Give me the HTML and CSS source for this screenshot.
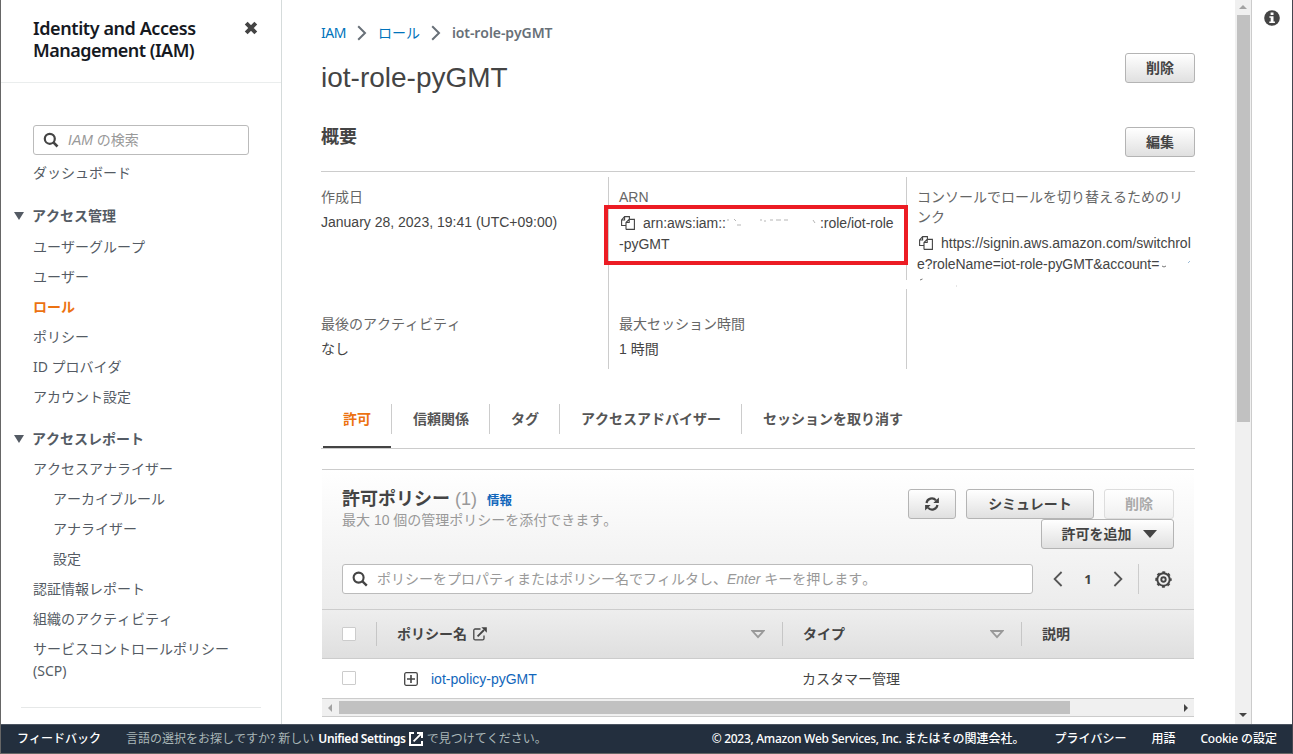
FILE: index.html
```html
<!DOCTYPE html>
<html lang="ja">
<head>
<meta charset="utf-8">
<title>iot-role-pyGMT - IAM</title>
<link rel="stylesheet" href="styles.css">
</head>
<body>
<div class="app">
  <div class="upper">
    <nav class="sidebar">
      <header class="side-head">
        <h2 class="side-title"><span class="t1">Identity and Access</span><br><span class="t2">Management (IAM)</span></h2>
        <svg class="close" width="14" height="14" viewBox="0 0 14 14"><path d="M2.2 2.2L11.8 11.8M11.8 2.2L2.2 11.8" stroke="#444" stroke-width="4"/></svg>
      </header>
      <div class="side-body">
        <div class="search side-search">
          <svg width="16" height="16" viewBox="0 0 16 16"><circle cx="6.8" cy="6.8" r="5" fill="none" stroke="#444" stroke-width="2.2"/><path d="M10.4 10.4L14.5 14.5" stroke="#444" stroke-width="2.6"/></svg>
          <span><i>IAM</i> の検索</span>
        </div>
        <a class="item first">ダッシュボード</a>
        <div class="section"><i class="tri"></i>アクセス管理</div>
        <a class="item">ユーザーグループ</a>
        <a class="item">ユーザー</a>
        <a class="item active">ロール</a>
        <a class="item">ポリシー</a>
        <a class="item">ID プロバイダ</a>
        <a class="item">アカウント設定</a>
        <div class="section second"><i class="tri"></i>アクセスレポート</div>
        <a class="item">アクセスアナライザー</a>
        <a class="item sub">アーカイブルール</a>
        <a class="item sub">アナライザー</a>
        <a class="item sub">設定</a>
        <a class="item">認証情報レポート</a>
        <a class="item">組織のアクティビティ</a>
        <a class="item">サービスコントロールポリシー<br>(SCP)</a>
        <div class="rule"></div>
      </div>
    </nav>

    <main class="main">
      <div class="crumbs">
        <a class="iam">IAM</a>
        <svg class="c1" width="10" height="16" viewBox="0 0 10 16"><path d="M1.2 1.2L8 8L1.2 14.8" fill="none" stroke="#687078" stroke-width="2"/></svg>
        <a>ロール</a>
        <svg class="c2" width="10" height="16" viewBox="0 0 10 16"><path d="M1.2 1.2L8 8L1.2 14.8" fill="none" stroke="#687078" stroke-width="2"/></svg>
        <b>iot-role-pyGMT</b>
      </div>
      <div class="title-row"><h1>iot-role-pyGMT</h1><button class="btn w70">削除</button></div>
      <div class="sum-row"><h3>概要</h3><button class="btn w70">編集</button></div>

      <div class="info">
        <div class="cell a"><div class="label">作成日</div><div class="val date">January 28, 2023, 19:41 (UTC+09:00)</div></div>
        <div class="cell b"><div class="label">ARN</div>
          <div class="val arn"><svg class="copy" width="14" height="14" viewBox="0 0 14 14"><path d="M5 9.5H.6V4L3.6 .6H8.4V3M.6 4H3.6V.6M5 13.4V6.5L8.2 3.4H13.4V13.4H5M5 6.5H8.2V3.4" fill="none" stroke="#444" stroke-width="1.1"/></svg><span>arn:aws:iam::</span><svg class="gap" width="94" height="14" viewBox="0 0 94 14"><path d="M1 4h2M8 3l2 2M11 9h4M34 4h2M38 5h2M44 4h3M50 4h5M58 4h4M87 4l2 3" stroke="#b5b5b5" stroke-width="1"/></svg><span>:role/iot-role</span><br>-pyGMT</div>
          <div class="highlight"></div>
        </div>
        <div class="cell c"><div class="label two">コンソールでロールを切り替えるためのリンク</div>
          <div class="val url"><svg class="copy" width="14" height="14" viewBox="0 0 14 14"><path d="M5 9.5H.6V4L3.6 .6H8.4V3M.6 4H3.6V.6M5 13.4V6.5L8.2 3.4H13.4V13.4H5M5 6.5H8.2V3.4" fill="none" stroke="#444" stroke-width="1.1"/></svg><span>https://signin.aws.amazon.com/switchrol</span><br><span class="url2">e?roleName=iot-role-pyGMT&amp;account=</span><svg class="gap2" width="32" height="14" viewBox="0 0 32 14"><path d="M3 9q2 2 4 0" fill="none" stroke="#777"/><path d="M29 6l2-2" stroke="#9bbbd8"/></svg><svg class="specks" width="44" height="10" viewBox="0 0 44 10"><path d="M3 2L5.500 1" stroke="#777"/><path d="M39 8h1" stroke="#ccc"/></svg></div>
        </div>
        <div class="cell a r2"><div class="label">最後のアクティビティ</div><div class="val">なし</div></div>
        <div class="cell b r2"><div class="label">最大セッション時間</div><div class="val">1 時間</div></div>
        <div class="cell c r2"></div>
      </div>

      <div class="tabs">
        <div class="tab on"><span>許可</span></div>
        <div class="tab"><span>信頼関係</span></div>
        <div class="tab"><span>タグ</span></div>
        <div class="tab"><span>アクセスアドバイザー</span></div>
        <div class="tab last"><span>セッションを取り消す</span></div>
      </div>

      <section class="panel">
        <div class="panel-head">
          <div class="head-top">
            <div class="head-text">
              <div class="ptitle"><b>許可ポリシー</b><span class="count">(1)</span><a class="more">情報</a></div>
              <div class="desc">最大 10 個の管理ポリシーを添付できます。</div>
            </div>
            <div class="actions">
              <button class="btn refresh"><svg width="14" height="14" viewBox="0 0 14 14"><path d="M1.5 6A5.4 5.4 0 0 1 11 3.4M12.5 8A5.4 5.4 0 0 1 3 10.6" fill="none" stroke="#444" stroke-width="2.2"/><path d="M13.9 .4V6H8.3ZM.1 13.6V8H5.7Z" fill="#444"/></svg></button>
              <button class="btn sim">シミュレート</button>
              <button class="btn w70 off">削除</button>
              <button class="btn add">許可を追加<i class="caret"></i></button>
            </div>
          </div>
          <div class="filter">
            <div class="search filter-box">
              <svg width="16" height="16" viewBox="0 0 16 16"><circle cx="6.6" cy="6.6" r="5" fill="none" stroke="#444" stroke-width="2.1"/><path d="M10.2 10.2L14.8 14.6" stroke="#444" stroke-width="2.4"/></svg>
              <span>ポリシーをプロパティまたはポリシー名でフィルタし、<i>Enter</i> キーを押します。</span>
            </div>
            <svg class="prev" width="10" height="16" viewBox="0 0 10 16"><path d="M8.6 1L1.6 8L8.6 15" fill="none" stroke="#555" stroke-width="1.8"/></svg>
            <b class="page">1</b>
            <svg class="next" width="10" height="16" viewBox="0 0 10 16"><path d="M1.4 1L8.4 8L1.4 15" fill="none" stroke="#555" stroke-width="1.8"/></svg>
            <div class="fsep"></div>
            <svg class="gear" width="17" height="17" viewBox="0 0 17 17"><circle cx="8.5" cy="8.5" r="6.2" fill="none" stroke="#444" stroke-width="2"/><circle cx="8.5" cy="8.5" r="7.4" fill="none" stroke="#444" stroke-width="1.600" stroke-dasharray="3 2.81" stroke-dashoffset="1.5"/><circle cx="8.5" cy="8.5" r="2.200" fill="none" stroke="#444" stroke-width="1.9"/></svg>
          </div>
        </div>
        <div class="thead">
          <div class="th chk"><i class="box"></i></div>
          <div class="th name">ポリシー名<svg class="ext" width="14" height="14" viewBox="0 0 14 14"><path d="M7.5 2H2.2Q.8 2 .8 3.4V11.4Q.8 12.9 2.2 12.9H9.6Q11 12.9 11 11.4V8.5" fill="none" stroke="#444" stroke-width="1.3"/><path d="M4.6 9.4L11 3" stroke="#444" stroke-width="1.8"/><path d="M8.4 .3H13.8V5.7Z" fill="#444"/></svg><svg class="sort" width="14" height="9" viewBox="0 0 14 9"><path d="M1.4 1H12.6L7 7.2Z" fill="none" stroke="#999" stroke-width="1.8"/></svg></div>
          <div class="th type">タイプ<svg class="sort" width="14" height="9" viewBox="0 0 14 9"><path d="M1.4 1H12.6L7 7.2Z" fill="none" stroke="#999" stroke-width="1.8"/></svg></div>
          <div class="th last">説明</div>
        </div>
        <div class="trow">
          <div class="td chk"><i class="box"></i></div>
          <div class="td link"><svg width="14" height="14" viewBox="0 0 14 14"><rect x=".7" y=".7" width="12.6" height="12.6" rx="1.5" fill="none" stroke="#444" stroke-width="1.3"/><path d="M3 7H11M7 3V11" stroke="#444" stroke-width="1.6"/></svg><a>iot-policy-pyGMT</a></div>
          <div class="td">カスタマー管理</div>
          <div class="td"></div>
        </div>
        <div class="hbar"><i class="al"></i><div class="hthumb"></div><i class="ar"></i></div>
      </section>
    </main>

    <div class="vbar"><i class="up"></i><div class="vthumb"></div><i class="down"></i></div>
    <aside class="help"><svg width="16" height="16" viewBox="0 0 16 16"><circle cx="8" cy="8" r="7.8" fill="#444"/><path d="M6.6 2.4H9.5V4.9H6.6ZM5.4 6.2H9.5V11.4H10.9V13H5.3V11.4H6.7V7.8H5.4Z" fill="#fff"/></svg></aside>
  </div>

  <footer class="footer">
    <span class="f1">フィードバック</span>
    <span class="f2">言語の選択をお探しですか? 新しい</span>
    <b class="f3">Unified Settings</b>
    <svg class="fext" width="14" height="14" viewBox="0 0 14 14"><path d="M5 1H1V13H13V9" fill="none" stroke="#fff" stroke-width="2"/><path d="M4.6 9.4L12 2" stroke="#fff" stroke-width="1.8"/><path d="M8 0H14V6H12V2H8Z" fill="#fff"/></svg>
    <span class="f4">で見つけてください。</span>
    <span class="f5"><span class="en">© 2023, Amazon Web Services, Inc.</span> またはその関連会社。</span>
    <span class="f6">プライバシー</span>
    <span class="f7">用語</span>
    <span class="f8"><span class="en">Cookie</span> の設定</span>
  </footer>
</div>
</body>
</html>
```
FILE: styles.css
```css
* { box-sizing: border-box; }
html, body { margin: 0; height: 754px; overflow: hidden; }
body { background: #fff; color: #444; font: 14px/20px "Liberation Sans", "Noto Sans CJK JP", sans-serif; font-kerning: none; }
svg { display: block; flex: none; }
h1, h2, h3 { margin: 0; }
i.tri, i.caret, i.box, i.up, i.down, i.al, i.ar { display: block; flex: none; }

.app { display: flex; flex-direction: column; width: 1293px; height: 754px; border-left: 1px solid #666; border-right: 1px solid #45454f; border-bottom: 1px solid #666; }
.upper { display: flex; height: 724px; flex: none; }

/* Sidebar */
.sidebar { width: 281px; flex: none; border-right: 1px solid #d5dbdb; color: #545b64; font-family: "Noto Sans", "Noto Sans CJK JP", sans-serif; }
.side-head { display: flex; justify-content: space-between; height: 83px; padding: 17px 23px 0 32px; border-bottom: 1px solid #eaeded; }
.side-title { font-size: 18px; line-height: 22px; font-weight: 600; color: #16191f; white-space: nowrap; }
.t1 { letter-spacing: -.42px; }
.t2 { letter-spacing: -.52px; }
.close { margin-top: 4px; }
.side-body { padding: 42px 20px 0 32px; }
.search { display: flex; align-items: center; height: 30px; border: 1px solid #bbb; border-radius: 3px; background: #fff; color: #999; font-family: "Liberation Sans", "Noto Sans CJK JP", sans-serif; white-space: nowrap; }
.side-search { width: 216px; padding-left: 9px; gap: 9px; margin-bottom: 3px; }
.item { display: block; padding: 4px 0; line-height: 22px; white-space: nowrap; }
.item.sub { padding-left: 20px; }
.item.active { color: #ec7211; font-weight: 700; }
.section { display: flex; align-items: center; height: 32px; margin: 12px 0 0 -19px; padding-bottom: 1px; gap: 8px; font-weight: 700; }
.section.second { height: 31px; margin-top: 11px; padding: 0; }
.tri { border: 5px solid transparent; border-top: 8px solid #545b64; border-bottom: 0; }
.rule { height: 1px; margin: 21px 0 0 -12px; background: #e6e8e8; }

/* Main column */
.main { width: 953px; flex: none; padding: 0 40px 0 39px; overflow: hidden; }
.crumbs { display: flex; align-items: center; height: 53px; padding-top: 13px; font-family: "Noto Sans", "Noto Sans CJK JP", sans-serif; color: #687078; }
.crumbs a { color: #0073bb; }
.crumbs .iam { letter-spacing: -.5px; }
.c1, .c2 { margin: 0 11px; }
.crumbs b { letter-spacing: -.08px; font-weight: 600; }
.title-row, .sum-row { display: flex; justify-content: space-between; align-items: flex-start; }
.title-row { height: 74px; }
.title-row h1 { font-size: 28px; line-height: 50px; font-weight: 400; }
.sum-row { height: 45px; border-bottom: 1px solid #ccc; }
.sum-row h3 { font-size: 18px; line-height: 20px; }
.btn { display: flex; align-items: center; justify-content: center; height: 30px; padding: 0; border: 1px solid #b4b4b4; border-radius: 3px; background: linear-gradient(#fff, #e0e0e0); color: #444; font: 700 14px/20px "Liberation Sans", "Noto Sans CJK JP", sans-serif; }
.w70 { width: 70px; }

.info { display: grid; grid-template-columns: 287px 298px 289px; grid-template-rows: 112px 80px; margin-top: 5px; }
.cell { padding: 10px 0 0 10px; white-space: nowrap; }
.cell.a { padding-left: 0; }
.cell.b { position: relative; border-left: 1px solid #ccc; }
.cell.c { height: 103px; border-left: 1px solid #ccc; }
.cell.r2 { height: 80px; padding-top: 25px; }
.label { color: #666; }
.label.two { width: 270px; white-space: normal; }
.val { margin-top: 5px; }
.arn, .url { margin-top: 6px; line-height: 21px; }
.arn { letter-spacing: -.02px; }
.url2 { letter-spacing: -.06px; }
.copy, .gap, .gap2 { display: inline-block; vertical-align: -2px; }
.copy { margin: 0 8px 0 2px; }
.specks { margin-top: 3px; }
.highlight { position: absolute; left: -5px; top: 28px; width: 304px; height: 60px; border: 4px solid #ec1c24; }

.tabs { display: flex; height: 60px; margin-top: 20px; padding-top: 15px; border-bottom: 1px solid #ccc; font-weight: 700; color: #555; }
.tab { height: 30px; padding: 0 20px 0 21px; line-height: 30px; border-right: 1px solid #ccc; white-space: nowrap; }
.tab.last { border-right: 0; }
.tab.on { position: relative; padding-left: 22px; color: #ec7211; }
.tab.on::after { content: ""; position: absolute; left: 2px; right: 0; bottom: -14px; height: 2px; background: #444; }

/* Policies panel */
.panel { width: 872px; margin: 20px 0 0 1px; border-top: 1px solid #ccc; }
.panel-head { height: 140px; padding: 19px 20px 0; border-bottom: 1px solid #ccc; background: linear-gradient(#fff, #ececec); }
.head-top { display: flex; justify-content: space-between; height: 75px; }
.ptitle { display: flex; align-items: center; height: 20px; font-size: 18px; }
.count { margin-left: 5px; color: #999; }
.more { margin: 4px 0 0 10px; font-size: 12.5px; font-weight: 700; color: #1166bb; }
.desc { line-height: 22px; color: #999; }
.actions { display: flex; flex-wrap: wrap; justify-content: flex-end; align-content: flex-start; column-gap: 10px; width: 280px; }
.refresh { width: 48px; }
.sim { width: 128px; }
.off { color: #aaa; border-color: #ddd; background: linear-gradient(#fff, #f0f0f0); }
.add { width: 133px; gap: 11px; padding-left: 3px; }
.caret { border: 7px solid transparent; border-top: 8px solid #444; border-bottom: 0; }
.filter { display: flex; align-items: center; height: 30px; }
.filter-box { width: 691px; padding-left: 9px; gap: 9px; }
.prev { margin-left: 20px; }
.page { width: 50px; text-align: center; font-family: "Open Sans", sans-serif; font-size: 13px; }
.fsep { width: 1px; height: 30px; margin: 0 16px 0 15px; background: #ccc; }

.thead, .trow { display: grid; grid-template-columns: 55px 406px 239px 172px; align-items: center; }
.thead { height: 49px; border-bottom: 1px solid #ccc; background: linear-gradient(#eee, #dfdfdf); font-weight: 700; }
.th { display: flex; align-items: center; height: 24px; border-right: 1px solid #c6c6c6; padding: 0 17px 0 20px; }
.th.last { border-right: 0; }
.box { width: 14px; height: 14px; border: 1px solid #ccc; border-radius: 1px; background: #fff; }
.th .box { margin-bottom: 1px; }
.ext { margin-left: 6px; }
.sort { margin-left: auto; }
.trow { height: 39px; }
.td { display: flex; align-items: center; padding: 1px 0 0 19px; }
.td.chk { padding: 0 0 1px 20px; }
.td.link { padding-left: 27px; gap: 13px; }
.td a { color: #1166bb; }
.hbar { display: flex; align-items: center; height: 19px; border: 1px solid #ccc; border-left: 0; border-right: 0; background: #f0f0f0; }
.hthumb { width: 731px; height: 13px; background: #c1c1c1; }
.al { margin: 0 7px 0 6px; border: 4px solid transparent; border-right-color: #a3a3a3; border-left: 0; }
.ar { margin-left: auto; margin-right: 6px; border: 4px solid transparent; border-left-color: #444; border-right: 0; }

/* Vertical scrollbar and help rail */
.vbar { display: flex; flex-direction: column; align-items: center; width: 17px; flex: none; padding: 5px 1px 7px 1px; border-right: 1px solid #ccc; background: #f0f0f0; }
.up { border: 4px solid transparent; border-bottom-color: #a3a3a3; border-top: 0; }
.down { margin-top: auto; border: 4px solid transparent; border-top-color: #444; border-bottom: 0; }
.vthumb { width: 13px; height: 407px; margin-top: 6px; background: #c1c1c1; }
.help { padding: 10px 0 0 12px; }

.footer { display: flex; align-items: center; height: 29px; flex: none; padding-left: 16px; border-top: 1px solid #4b5461; background: #232f3e; color: #fff; font: 500 12px/20px "Noto Sans", "Noto Sans CJK JP", sans-serif; font-kerning: none; white-space: nowrap; }
.f2, .f4 { color: #aab7b8; font-weight: 400; }
.f2 { margin-left: 25px; }
.f3 { margin-left: 4px; font-weight: 600; letter-spacing: -.38px; }
.fext { margin: 0 4px 0 3px; }
.en { letter-spacing: -.3px; }
.f5 { margin-left: auto; margin-right: 30px; }
.f6 { margin-right: 25px; }
.f7 { margin-right: 25px; }
.f8 { margin-right: 15px; }
```
